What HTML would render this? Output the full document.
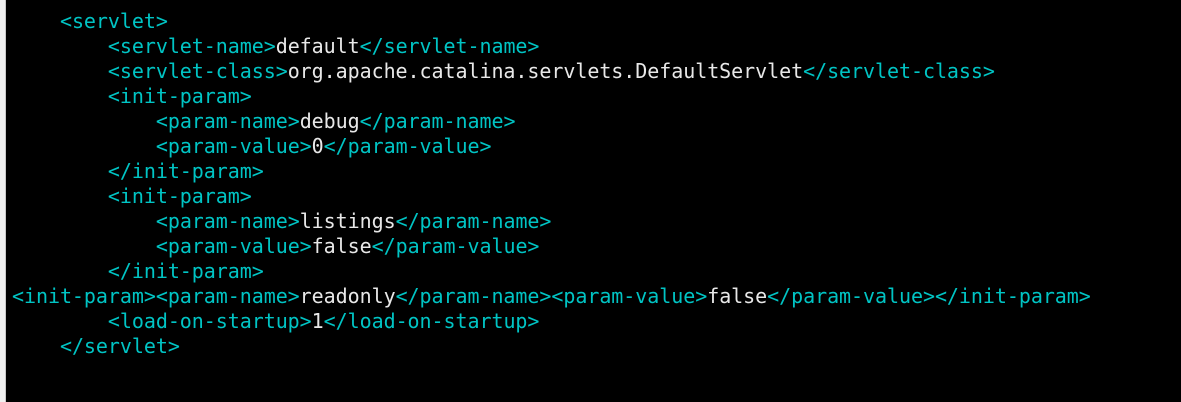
<!DOCTYPE html>
<html><head><meta charset="utf-8"><style>
html,body{margin:0;padding:0;width:1181px;height:402px;overflow:hidden;background:#000;}
.l{position:absolute;left:0;top:0;width:6px;height:402px;background:#f0f0f0;}
.l:after{content:"";position:absolute;right:0;top:0;width:1px;height:402px;background:#c8c8c8;}
pre{position:absolute;left:12px;top:9px;margin:0;font-family:"DejaVu Sans Mono","Liberation Mono",monospace;font-size:20px;line-height:25px;letter-spacing:-0.055px;color:#e8e8e8;}
b{font-weight:normal;color:#00c4c4;}
</style></head><body><div class="l"></div><pre>    <b>&lt;servlet&gt;</b>
        <b>&lt;servlet-name&gt;</b>default<b>&lt;/servlet-name&gt;</b>
        <b>&lt;servlet-class&gt;</b>org.apache.catalina.servlets.DefaultServlet<b>&lt;/servlet-class&gt;</b>
        <b>&lt;init-param&gt;</b>
            <b>&lt;param-name&gt;</b>debug<b>&lt;/param-name&gt;</b>
            <b>&lt;param-value&gt;</b>0<b>&lt;/param-value&gt;</b>
        <b>&lt;/init-param&gt;</b>
        <b>&lt;init-param&gt;</b>
            <b>&lt;param-name&gt;</b>listings<b>&lt;/param-name&gt;</b>
            <b>&lt;param-value&gt;</b>false<b>&lt;/param-value&gt;</b>
        <b>&lt;/init-param&gt;</b>
<b>&lt;init-param&gt;&lt;param-name&gt;</b>readonly<b>&lt;/param-name&gt;&lt;param-value&gt;</b>false<b>&lt;/param-value&gt;&lt;/init-param&gt;</b>
        <b>&lt;load-on-startup&gt;</b>1<b>&lt;/load-on-startup&gt;</b>
    <b>&lt;/servlet&gt;</b></pre></body></html>
